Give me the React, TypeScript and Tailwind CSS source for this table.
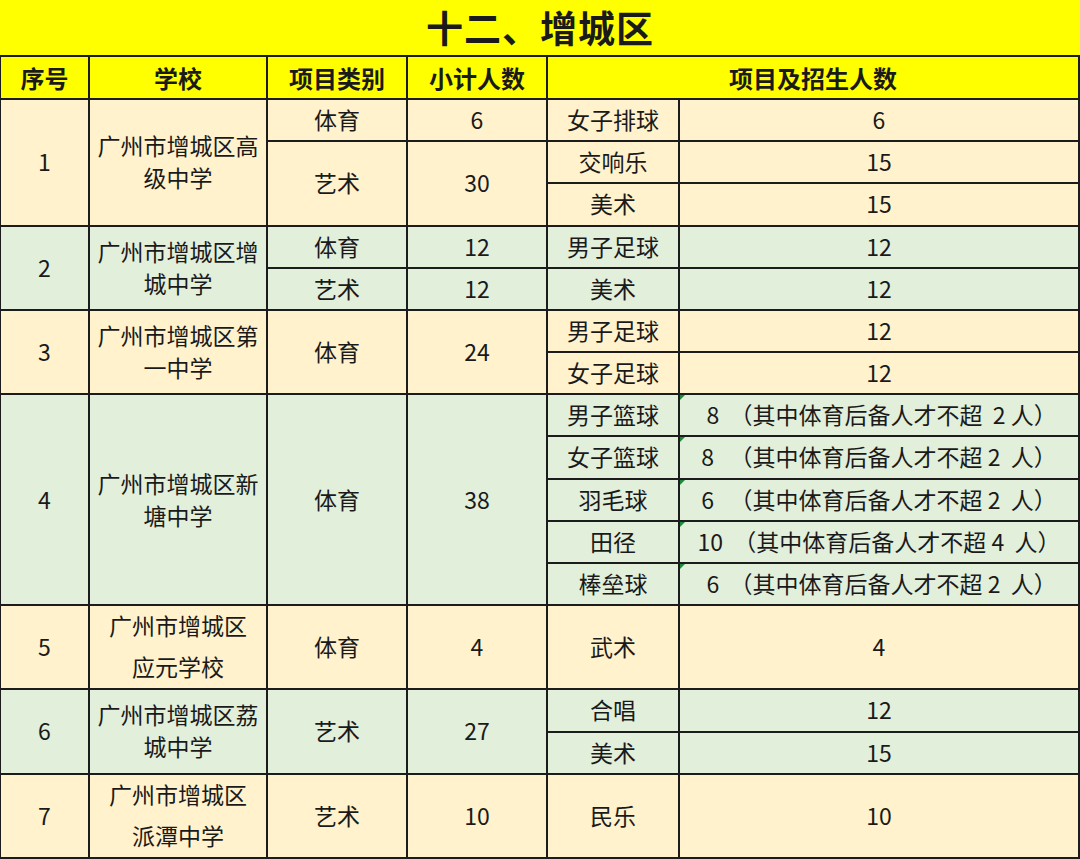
import React from "react";

type Cell = {
  text: string;
  span?: number;
  lines?: boolean; // taller line spacing
  mark?: boolean; // excel "number as text" marker
};

type Group = {
  bg: string;
  cells: Cell[];
};

const groups: Group[] = [
  {
    bg: "bg-[#fff2cc]",
    cells: [
      { text: "1", span: 3 },
      { text: "广州市增城区高\n级中学", span: 3 },
      { text: "体育" },
      { text: "6" },
      { text: "女子排球" },
      { text: "6" },
      { text: "艺术", span: 2 },
      { text: "30", span: 2 },
      { text: "交响乐" },
      { text: "15" },
      { text: "美术" },
      { text: "15" },
    ],
  },
  {
    bg: "bg-[#e2efda]",
    cells: [
      { text: "2", span: 2 },
      { text: "广州市增城区增\n城中学", span: 2 },
      { text: "体育" },
      { text: "12" },
      { text: "男子足球" },
      { text: "12" },
      { text: "艺术" },
      { text: "12" },
      { text: "美术" },
      { text: "12" },
    ],
  },
  {
    bg: "bg-[#fff2cc]",
    cells: [
      { text: "3", span: 2 },
      { text: "广州市增城区第\n一中学", span: 2 },
      { text: "体育", span: 2 },
      { text: "24", span: 2 },
      { text: "男子足球" },
      { text: "12" },
      { text: "女子足球" },
      { text: "12" },
    ],
  },
  {
    bg: "bg-[#e2efda]",
    cells: [
      { text: "4", span: 5 },
      { text: "广州市增城区新\n塘中学", span: 5 },
      { text: "体育", span: 5 },
      { text: "38", span: 5 },
      { text: "男子篮球" },
      { text: " 8  （其中体育后备人才不超  2 人）", mark: true },
      { text: "女子篮球" },
      { text: "8   （其中体育后备人才不超 2  人）", mark: true },
      { text: "羽毛球" },
      { text: "6   （其中体育后备人才不超 2  人）", mark: true },
      { text: "田径" },
      { text: "10  （其中体育后备人才不超 4  人）", mark: true },
      { text: "棒垒球" },
      { text: " 6  （其中体育后备人才不超 2  人）", mark: true },
    ],
  },
  {
    bg: "bg-[#fff2cc]",
    cells: [
      { text: "5", span: 2 },
      { text: "广州市增城区\n应元学校", span: 2, lines: true },
      { text: "体育", span: 2 },
      { text: "4", span: 2 },
      { text: "武术", span: 2 },
      { text: "4", span: 2 },
    ],
  },
  {
    bg: "bg-[#e2efda]",
    cells: [
      { text: "6", span: 2 },
      { text: "广州市增城区荔\n城中学", span: 2 },
      { text: "艺术", span: 2 },
      { text: "27", span: 2 },
      { text: "合唱" },
      { text: "12" },
      { text: "美术" },
      { text: "15" },
    ],
  },
  {
    bg: "bg-[#fff2cc]",
    cells: [
      { text: "7", span: 2 },
      { text: "广州市增城区\n派潭中学", span: 2, lines: true },
      { text: "艺术", span: 2 },
      { text: "10", span: 2 },
      { text: "民乐", span: 2 },
      { text: "10", span: 2 },
    ],
  },
];

const spanClass: Record<number, string> = {
  1: "row-span-1",
  2: "row-span-2",
  3: "row-span-3",
  5: "row-span-5",
};

const headers = ["序号", "学校", "项目类别", "小计人数"];

export default function App() {
  return (
    <div
      className="w-[1080px] h-[859px] flex flex-col text-[#1a1a1a] overflow-hidden"
      style={{ fontFamily: '"Noto Sans CJK SC", "Noto Sans", sans-serif' }}
    >
      {/* title */}
      <div className="h-[55px] shrink-0 bg-[#ffff00] flex items-center justify-center">
        <h1 className="text-[37px] font-bold tracking-[1px] leading-none">十二、增城区</h1>
      </div>

      <div className="flex-1 min-h-0 grid grid-cols-[87px_176px_138px_138px_130px_1fr] grid-rows-[41px_repeat(18,minmax(0,1fr))] gap-[2px] bg-[#1c1c1c] pt-[2px] pb-[2px] pl-[1px] pr-[2px]">
        {headers.map((h) => (
          <div
            key={h}
            className="bg-[#ffff00] flex items-center justify-center text-[24px] font-bold"
          >
            {h}
          </div>
        ))}
        <div className="col-span-2 bg-[#ffff00] flex items-center justify-center text-[24px] font-bold">
          项目及招生人数
        </div>

        {groups.map((g, gi) =>
          g.cells.map((c, ci) => (
            <div
              key={`${gi}-${ci}`}
              className={`${g.bg} ${spanClass[c.span ?? 1]} relative min-h-0 flex items-center justify-center text-center text-[23px] whitespace-pre pb-[2px] ${
                c.lines ? "leading-[41px]" : "leading-[32px]"
              }`}
            >
              {c.mark && (
                <span className="absolute left-0 top-0 w-0 h-0 border-t-[5px] border-r-[5px] border-t-[#1e8a3a] border-r-transparent" />
              )}
              {c.text}
            </div>
          ))
        )}
      </div>
    </div>
  );
}
